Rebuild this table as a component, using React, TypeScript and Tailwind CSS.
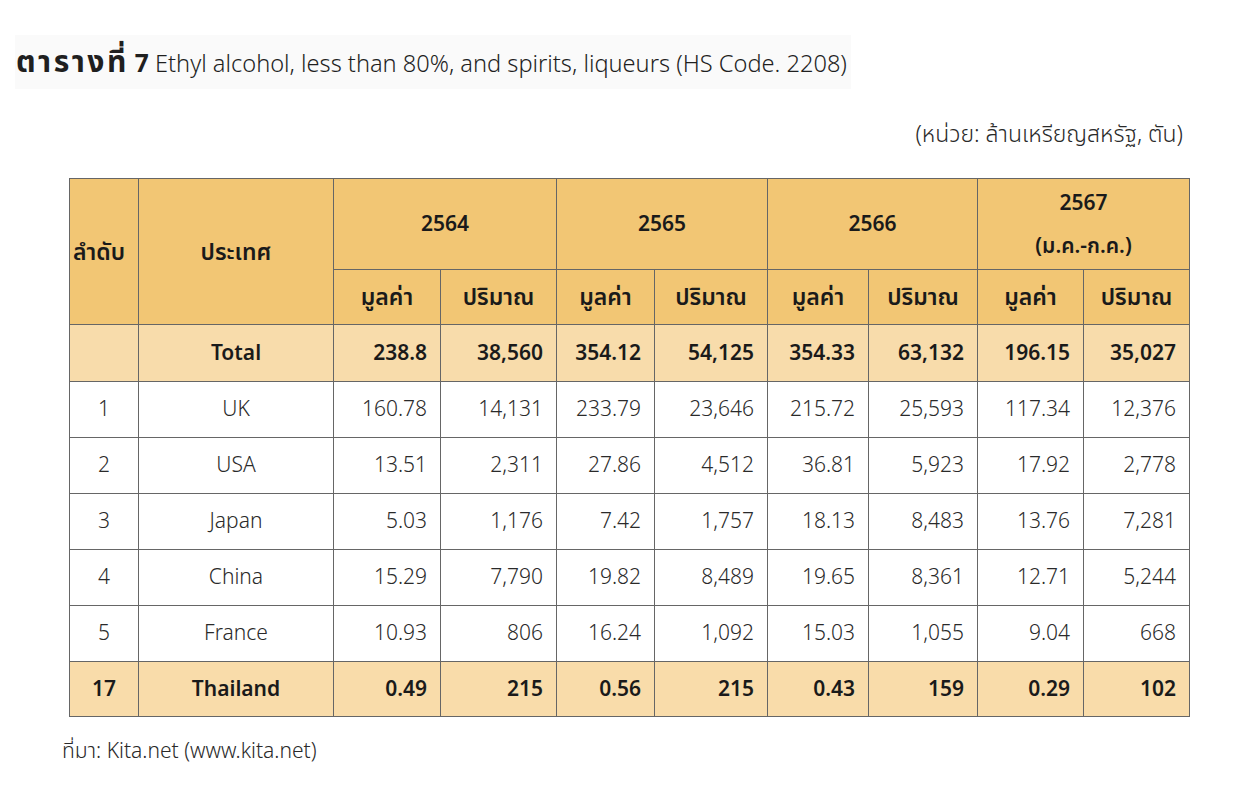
const font = { fontFamily: '"Noto Sans", "Noto Sans Thai", Tahoma, sans-serif' }

interface Row {
  rank: string
  country: string
  values: string[]
}

const total: Row = {
  rank: "",
  country: "Total",
  values: ["238.8", "38,560", "354.12", "54,125", "354.33", "63,132", "196.15", "35,027"],
}

const rows: Row[] = [
  { rank: "1", country: "UK", values: ["160.78", "14,131", "233.79", "23,646", "215.72", "25,593", "117.34", "12,376"] },
  { rank: "2", country: "USA", values: ["13.51", "2,311", "27.86", "4,512", "36.81", "5,923", "17.92", "2,778"] },
  { rank: "3", country: "Japan", values: ["5.03", "1,176", "7.42", "1,757", "18.13", "8,483", "13.76", "7,281"] },
  { rank: "4", country: "China", values: ["15.29", "7,790", "19.82", "8,489", "19.65", "8,361", "12.71", "5,244"] },
  { rank: "5", country: "France", values: ["10.93", "806", "16.24", "1,092", "15.03", "1,055", "9.04", "668"] },
]

const thailand: Row = {
  rank: "17",
  country: "Thailand",
  values: ["0.49", "215", "0.56", "215", "0.43", "159", "0.29", "102"],
}

const colWidths = [69, 195, 107, 116, 98, 113, 101, 109, 106, 106]

const cell = "border-[1.5px] border-[#666]"

function DataRow({ row, bg, bold, h }: { row: Row; bg: string; bold?: boolean; h: string }) {
  const weight = bold ? "font-semibold text-[#1a1a1a]" : "font-light text-[#2a2a2a]"
  return (
    <tr className={`${bg} ${h}`}>
      <td className={`${cell} text-center ${weight}`}>{row.rank}</td>
      <td className={`${cell} text-center ${weight}`}>{row.country}</td>
      {row.values.map((v, i) => (
        <td key={i} className={`${cell} pr-[13px] text-right ${weight}`}>
          {v}
        </td>
      ))}
    </tr>
  )
}

export default function App() {
  return (
    <div className="min-h-screen w-[1238px] bg-white text-[#1f1f1f]" style={font}>
      <div className="pt-[35px] pl-[15px]">
        <div className="flex h-[54px] w-[836px] items-center bg-[#fafafa]">
          <div className="whitespace-nowrap pl-[1px] text-[23.6px] leading-[32px]">
            <span className="font-bold">
              <span className="text-[30px] tracking-[2.5px]">ตารางที่</span>{" "}
              <span className="text-[24.5px]">7</span>
            </span>{" "}
            <span className="font-light">
              Ethyl alcohol, less than 80%, and spirits, liqueurs (HS Code. 2208)
            </span>
          </div>
        </div>
      </div>

      <div className="mt-[27px] flex justify-end pr-[55px] text-[23px] font-light text-[#2a2a2a]">
        (หน่วย: ล้านเหรียญสหรัฐ, ตัน)
      </div>

      <div className="mt-[27px] pl-[69px]">
        <table className="table-fixed border-collapse text-[21px]">
          <colgroup>
            {colWidths.map((w, i) => (
              <col key={i} style={{ width: w }} />
            ))}
          </colgroup>
          <thead className="bg-[#f2c674] text-[#1a1a1a]">
            <tr className="h-[91px]">
              <th rowSpan={2} className={`${cell} pl-[3px] text-left text-[23px] font-semibold`}>
                ลำดับ
              </th>
              <th rowSpan={2} className={`${cell} text-[23px] font-semibold`}>
                ประเทศ
              </th>
              <th colSpan={2} className={`${cell} font-semibold`}>2564</th>
              <th colSpan={2} className={`${cell} font-semibold`}>2565</th>
              <th colSpan={2} className={`${cell} font-semibold`}>2566</th>
              <th colSpan={2} className={`${cell} font-semibold leading-[43px]`}>
                2567
                <br />
                (ม.ค.-ก.ค.)
              </th>
            </tr>
            <tr className="h-[55px] text-[23px]">
              {[0, 1, 2, 3].flatMap((i) => [
                <th key={`a${i}`} className={`${cell} font-semibold`}>มูลค่า</th>,
                <th key={`b${i}`} className={`${cell} font-semibold`}>ปริมาณ</th>,
              ])}
            </tr>
          </thead>
          <tbody>
            <DataRow row={total} bg="bg-[#f8dcab]" bold h="h-[57px]" />
            {rows.map((r) => (
              <DataRow key={r.rank} row={r} bg="bg-white" h="h-[56px]" />
            ))}
            <DataRow row={thailand} bg="bg-[#f9dcaa]" bold h="h-[55px]" />
          </tbody>
        </table>
      </div>

      <div className="mt-[18px] pl-[62px] text-[21px] font-light text-[#2a2a2a]">ที่มา: Kita.net (www.kita.net)</div>
    </div>
  )
}
